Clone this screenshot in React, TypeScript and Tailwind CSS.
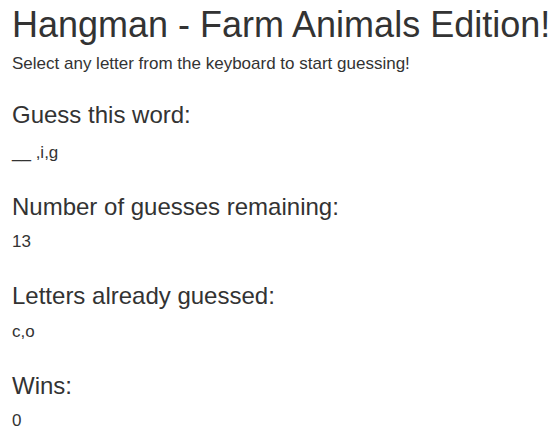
import React from 'react';

const sections = [
  { label: 'Guess this word:', value: '__ ,i,g' },
  { label: 'Number of guesses remaining:', value: '13' },
  { label: 'Letters already guessed:', value: 'c,o' },
  { label: 'Wins:', value: '0' },
];

export default function App() {
  return (
    <div className="min-h-screen bg-white px-3 pt-[5px] text-[#333] font-['Liberation_Sans',Arial,sans-serif]">
      <h1 className="whitespace-nowrap text-[36px] leading-[1.1]">Hangman - Farm Animals Edition!</h1>
      <p className="mt-[8px] text-[17px] leading-[22px]">Select any letter from the keyboard to start guessing!</p>

      <div className="mt-[27px]">
        {sections.map((s, i) => (
          <div key={i} className={i === 0 ? '' : 'mt-[31px]'}>
            <h3 className="text-[24px] leading-[1.1]">{s.label}</h3>
            <p className={(i === 0 ? 'mt-[15px]' : 'mt-[12px]') + ' text-[17px] leading-[20px]'}>{s.value}</p>
          </div>
        ))}
      </div>
    </div>
  );
}
